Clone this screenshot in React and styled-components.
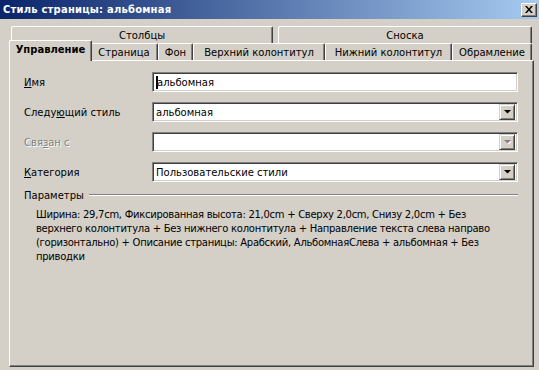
import React from 'react';
import styled, { createGlobalStyle } from 'styled-components';

const GlobalStyle = createGlobalStyle`
    html, body {
        margin: 0;
        padding: 0;
        background: #d4d0c8;
    }
    body {
        font-family: "DejaVu Sans", Verdana, sans-serif;
        font-size: 10px;
        color: #000;
    }
`;

const backTabs = [
    { label: 'Столбцы', width: 262 },
    { label: 'Сноска', width: 254 },
];

const frontTabs = [
    { label: 'Управление', width: 79, active: true },
    { label: 'Страница', width: 68 },
    { label: 'Фон', width: 35 },
    { label: 'Верхний колонтитул', width: 132 },
    { label: 'Нижний колонтитул', width: 127 },
    { label: 'Обрамление', width: 80 },
];

function Arrow({ disabled }){
    return (
        <svg width="7" height="4" viewBox="0 0 7 4">
            {disabled && <path d="M1 1h7L4.5 4.5z" fill="#fff" />}
            <path d="M0 0h7L3.5 3.5z" fill={disabled ? '#808080' : '#000'} />
        </svg>
    );
}

function Combo({ value, disabled }){
    return (
        <Field>
            <FieldText>{value}</FieldText>
            <DropButton>
                <Arrow disabled={disabled} />
            </DropButton>
        </Field>
    );
}

function App(){
    return (
        <Window>
            <GlobalStyle />
            <TitleBar>
                <Title>Стиль страницы: альбомная</Title>
                <CloseButton>
                    <svg width="8" height="7" viewBox="0 0 8 7">
                        <path d="M0 0h2l2 2.5L6 0h2L5 3.5 8 7H6L4 4.5 2 7H0l3-3.5z" fill="#000" />
                    </svg>
                </CloseButton>
            </TitleBar>
            <Body>
                <TabRow $back>
                    {backTabs.map((t) => (
                        <Tab key={t.label} $width={t.width}>{t.label}</Tab>
                    ))}
                </TabRow>
                <TabRow>
                    {frontTabs.map((t) => (
                        <Tab key={t.label} $width={t.width} $active={t.active}>{t.label}</Tab>
                    ))}
                </TabRow>
                <Panel>
                    <FormGrid>
                        <Label><u>И</u>мя</Label>
                        <Field>
                            <Caret />
                            <FieldText>альбомная</FieldText>
                        </Field>

                        <Label>Следу<u>ю</u>щий стиль</Label>
                        <Combo value="альбомная" />

                        <Label $disabled>Свя<u>з</u>ан с</Label>
                        <Combo value="" disabled />

                        <Label><u>К</u>атегория</Label>
                        <Combo value="Пользовательские стили" />
                    </FormGrid>

                    <GroupHeader>
                        <span>Параметры</span>
                        <GroupLine />
                    </GroupHeader>
                    <Description>
                        Ширина: 29,7cm, Фиксированная высота: 21,0cm + Сверху 2,0cm, Снизу 2,0cm + Без<br />
                        верхнего колонтитула + Без нижнего колонтитула + Направление текста слева направо<br />
                        (горизонтально) + Описание страницы: Арабский, АльбомнаяСлева + альбомная + Без<br />
                        приводки
                    </Description>
                </Panel>
            </Body>
        </Window>
    );
}

export default App;

const Window = styled.div`
    width: 539px;
    height: 370px;
    overflow: hidden;
    background: #d4d0c8;
`;

const TitleBar = styled.div`
    height: 19px;
    display: flex;
    align-items: center;
    justify-content: space-between;
    padding: 0 2px 0 3px;
    background: linear-gradient(to right, #0a246a, #a6caf0);
`;

const Title = styled.span`
    color: #fff;
    font-weight: bold;
    font-size: 10px;
    letter-spacing: 0.2px;
    white-space: nowrap;
`;

const CloseButton = styled.div`
    width: 16px;
    height: 14px;
    box-sizing: border-box;
    display: flex;
    align-items: center;
    justify-content: center;
    background: #d4d0c8;
    border: 1px solid;
    border-color: #fff #404040 #404040 #fff;
    box-shadow: inset -1px -1px #808080;
`;

const Body = styled.div`
    padding: 8px 5px 0 9px;
`;

const TabRow = styled.div`
    display: flex;
    align-items: flex-end;
    height: ${(p) => (p.$back ? '16px' : '17px')};
    padding-left: 2px;
    gap: ${(p) => (p.$back ? '5px' : '0')};
    position: relative;
    z-index: ${(p) => (p.$back ? 0 : 1)};
`;

const Tab = styled.div`
    box-sizing: border-box;
    width: ${(p) => (p.$active ? p.$width + 4 : p.$width)}px;
    height: ${(p) => (p.$active ? '21px' : '17px')};
    margin: ${(p) => (p.$active ? '0 -2px -1px' : '0')};
    position: relative;
    z-index: ${(p) => (p.$active ? 2 : 1)};
    display: flex;
    align-items: center;
    justify-content: center;
    padding-bottom: ${(p) => (p.$active ? '3px' : '0')};
    background: #d4d0c8;
    border-top: 1px solid #fff;
    border-left: 1px solid #fff;
    border-right: 1px solid #404040;
    border-radius: 2px 2px 0 0;
    box-shadow: inset -1px 0 #808080;
    font-weight: ${(p) => (p.$active ? 'bold' : 'normal')};
    white-space: nowrap;
`;

const Panel = styled.div`
    box-sizing: border-box;
    width: 525px;
    height: 307px;
    border: 1px solid;
    border-color: #fff #404040 #404040 #fff;
    box-shadow: inset -1px -1px #808080;
    padding: 11px 15px 0 14px;
`;

const FormGrid = styled.div`
    display: grid;
    grid-template-columns: 128px 1fr;
    grid-auto-rows: 20px;
    row-gap: 10px;
    align-items: center;
`;

const Label = styled.span`
    color: ${(p) => (p.$disabled ? '#808080' : '#000')};
    text-shadow: ${(p) => (p.$disabled ? '1px 1px #fff' : 'none')};
    white-space: nowrap;
`;

const Field = styled.div`
    box-sizing: border-box;
    height: 20px;
    display: flex;
    align-items: center;
    background: #fff;
    border: 1px solid;
    border-color: #808080 #fff #fff #808080;
    box-shadow: inset 1px 1px #404040, inset -1px -1px #d4d0c8;
    padding: 2px;
`;

const FieldText = styled.span`
    flex: 1;
    padding-left: 1px;
    white-space: nowrap;
`;

const Caret = styled.span`
    width: 2px;
    height: 13px;
    margin-left: 1px;
    margin-right: -2px;
    background: #000;
`;

const DropButton = styled.div`
    box-sizing: border-box;
    width: 16px;
    height: 16px;
    display: flex;
    align-items: center;
    justify-content: center;
    background: #d4d0c8;
    border: 1px solid;
    border-color: #d4d0c8 #404040 #404040 #d4d0c8;
    box-shadow: inset 1px 1px #fff, inset -1px -1px #808080;
`;

const GroupHeader = styled.div`
    display: flex;
    align-items: center;
    gap: 5px;
    margin-top: 6px;
    height: 14px;
`;

const GroupLine = styled.div`
    flex: 1;
    height: 0;
    border-top: 1px solid #808080;
    border-bottom: 1px solid #fff;
`;

const Description = styled.p`
    margin: 6px 0 0 12px;
    line-height: 14px;
    letter-spacing: -0.28px;
    white-space: nowrap;
`;
